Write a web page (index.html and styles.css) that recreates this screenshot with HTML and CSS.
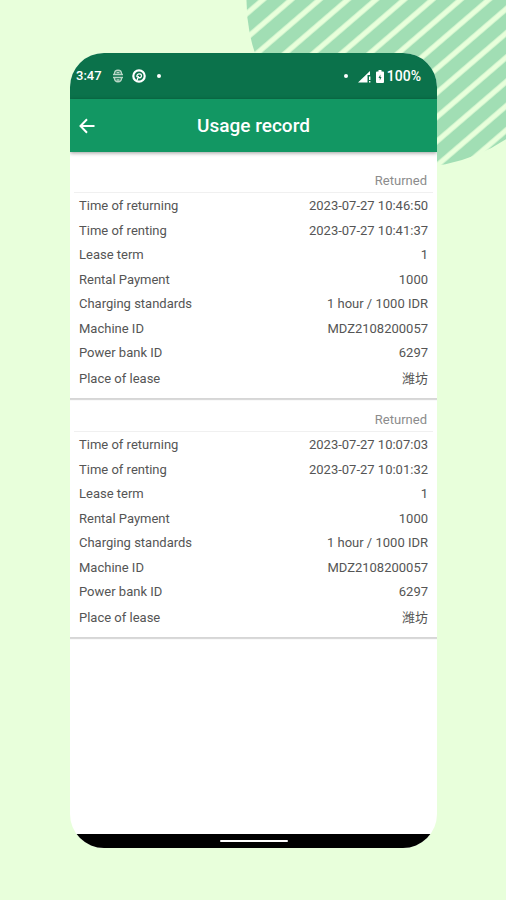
FILE: index.html
```html
<!DOCTYPE html>
<html lang="en">
  <head>
    <meta charset="UTF-8" />
    <meta name="viewport" content="width=device-width, initial-scale=1.0" />
    <title>Usage record</title>
    <link rel="stylesheet" href="styles.css">
  </head>
  <body>
    <svg class="stripes" viewBox="0 0 260 170" aria-hidden="true">
      <defs>
        <pattern id="lines" width="40" height="18.4" patternUnits="userSpaceOnUse" patternTransform="translate(73 0) rotate(-40.7)">
          <rect width="40" height="18.4" fill="#a1deb4" />
          <rect width="40" height="2.6" fill="#e8ffdb" />
          <rect y="15.8" width="40" height="2.6" fill="#e8ffdb" />
        </pattern>
      </defs>
      <circle cx="167" cy="1" r="166.5" fill="url(#lines)" />
    </svg>
    <div class="phone">
      <div class="status-bar">
        <span class="clock">3:47</span>
        <svg class="app-icon" width="12" height="14" viewBox="0 0 12 14" fill="none" stroke="#b9d6c6" stroke-width="1.4">
          <path d="M2.500 5C2.500 0 9.500 0 9.500 5M2.500 9C2.500 14 9.500 14 9.500 9" />
          <path d="M1 5.500h10M1 8.500h10M4.500 3.500h3M4.500 11h3" />
        </svg>
        <svg width="14" height="14" viewBox="0 0 14 14" fill="none" stroke="#fff">
          <circle cx="7" cy="7" r="5.700" stroke-width="2.200" />
          <path d="M5 11.500L6.500 7M5 8C4 4.500 9.500 3.500 9.500 6.800C9.500 8.800 7.500 9 6.500 8.500" stroke-width="1.300" />
        </svg>
        <span class="dot"></span>
        <div class="status-right">
          <span class="dot"></span>
          <svg width="13" height="13" viewBox="0 0 13 13">
            <path d="M0 12.500L12 1V5H9.500V12.500Z" fill="#fff" />
            <path d="M11 6.500h1.400v3.500h-1.400zM11 11h1.400v1.500h-1.400z" fill="#fff" />
          </svg>
          <svg class="battery" width="8" height="13" viewBox="0 0 8 13">
            <path d="M2.500 0h3v1.500H7a1 1 0 0 1 1 1V12a1 1 0 0 1-1 1H1a1 1 0 0 1-1-1V2.500a1 1 0 0 1 1-1h1.500z" fill="#fff" />
            <path d="M4.400 4.500L2.500 8h1.300v2.500L5.500 7H4.400z" fill="#0b724b" />
          </svg>
          <span class="percent">100%</span>
        </div>
      </div>
      <header class="app-bar">
        <button class="back" type="button" aria-label="Back">
          <svg width="16" height="16" viewBox="0 0 16 16" fill="none" stroke="#fff" stroke-width="2">
            <path d="M15.500 8H2M8 1.300L1.500 8L8 14.700" />
          </svg>
        </button>
        <h1>Usage record</h1>
      </header>
      <main class="records">
        <section class="record">
          <div class="state">Returned</div>
          <table>
            <tbody>
              <tr><th scope="row">Time of returning</th><td>2023-07-27 10:46:50</td></tr>
              <tr><th scope="row">Time of renting</th><td>2023-07-27 10:41:37</td></tr>
              <tr><th scope="row">Lease term</th><td>1</td></tr>
              <tr><th scope="row">Rental Payment</th><td>1000</td></tr>
              <tr><th scope="row">Charging standards</th><td>1 hour / 1000 IDR</td></tr>
              <tr><th scope="row">Machine ID</th><td>MDZ2108200057</td></tr>
              <tr><th scope="row">Power bank ID</th><td>6297</td></tr>
              <tr class="place"><th scope="row">Place of lease</th><td lang="zh">潍坊</td></tr>
            </tbody>
          </table>
        </section>
        <section class="record">
          <div class="state">Returned</div>
          <table>
            <tbody>
              <tr><th scope="row">Time of returning</th><td>2023-07-27 10:07:03</td></tr>
              <tr><th scope="row">Time of renting</th><td>2023-07-27 10:01:32</td></tr>
              <tr><th scope="row">Lease term</th><td>1</td></tr>
              <tr><th scope="row">Rental Payment</th><td>1000</td></tr>
              <tr><th scope="row">Charging standards</th><td>1 hour / 1000 IDR</td></tr>
              <tr><th scope="row">Machine ID</th><td>MDZ2108200057</td></tr>
              <tr><th scope="row">Power bank ID</th><td>6297</td></tr>
              <tr class="place"><th scope="row">Place of lease</th><td lang="zh">潍坊</td></tr>
            </tbody>
          </table>
        </section>
      </main>
      <div class="nav-bar"><span class="handle"></span></div>
    </div>
  </body>
</html>
```

FILE: styles.css
```css
* {
  box-sizing: border-box;
}
body {
  margin: 0;
  min-height: 100vh;
  padding: 53px 69px 52px 70px;
  display: flex;
  background-color: #e8ffdb;
  font-family: Roboto, 'Noto Sans CJK SC', sans-serif;
  font-size: 13px;
  line-height: 16px;
  color: #555;
}
.stripes {
  position: absolute;
  top: 0;
  right: 0;
  width: 260px;
  height: 170px;
}
.phone {
  position: relative;
  flex: 1;
  display: flex;
  flex-direction: column;
  overflow: hidden;
  border-radius: 34px;
  background-color: #fff;
}
.status-bar {
  display: flex;
  align-items: center;
  height: 46px;
  padding: 0 16px 0 6px;
  background-color: #0b724b;
  color: #fff;
}
.clock,
.percent {
  font-weight: 500;
}
.percent {
  font-size: 14px;
}
.app-icon {
  margin: 0 8px 0 10px;
}
.dot {
  width: 4px;
  height: 4px;
  margin-left: 11px;
  border-radius: 50%;
  background-color: #fff;
}
.status-right {
  display: flex;
  align-items: center;
  margin-left: auto;
}
.status-right .dot {
  margin-right: 10px;
}
.battery {
  margin: 0 3px 0 5px;
}
.app-bar {
  position: relative;
  display: grid;
  grid-template-columns: 34px 1fr 34px;
  align-items: center;
  height: 53px;
  background-color: #129763;
  box-shadow: 0 1px 4px rgba(0, 0, 0, 0.4);
  color: #fff;
}
.back {
  display: flex;
  justify-content: center;
  padding: 0;
  border: none;
  background: none;
  cursor: pointer;
}
h1 {
  margin: 0;
  font-size: 19px;
  font-weight: 500;
  line-height: 24px;
  text-align: center;
}
.records {
  flex: 1;
  padding-top: 8px;
}
.record {
  padding: 0 4px 5px;
  border-bottom: 1px solid #d6d6d6;
  box-shadow: 0 1px 1px rgba(0, 0, 0, 0.15);
}
.state {
  padding: 13px 6px 3px;
  margin-bottom: 1px;
  border-bottom: 1px solid #f0f0f0;
  color: #8c8c8c;
  text-align: right;
}
table {
  width: 100%;
  border-collapse: collapse;
}
tr {
  height: 24px;
}
tr:nth-child(even) {
  height: 25px;
}
tr.place {
  height: 28px;
}
th,
td {
  padding: 0 5px;
  font-weight: 400;
  text-align: left;
}
td {
  text-align: right;
}
.nav-bar {
  display: flex;
  align-items: center;
  justify-content: center;
  height: 14px;
  background-color: #000;
}
.handle {
  width: 68px;
  height: 2px;
  border-radius: 1px;
  background-color: #fff;
}
```
